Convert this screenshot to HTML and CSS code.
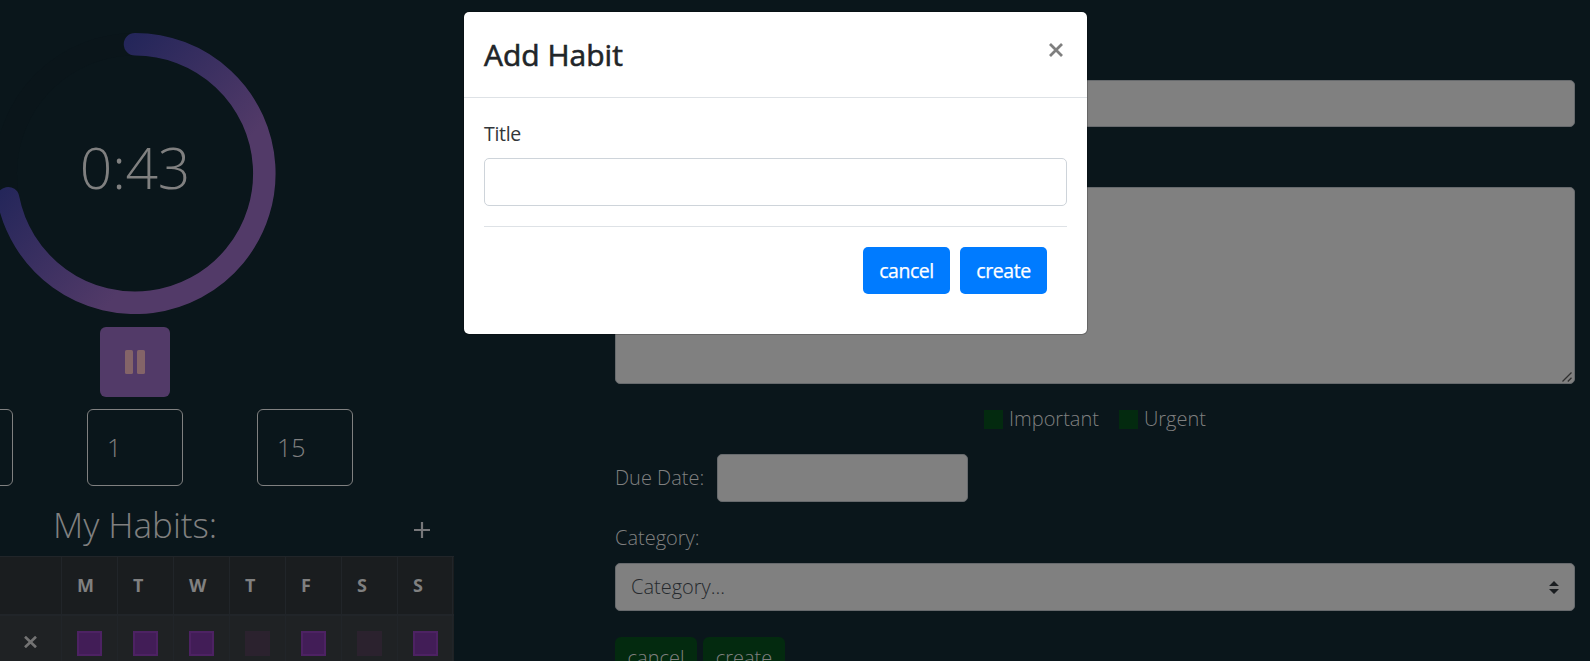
FILE: index.html
```html
<!DOCTYPE html>
<html lang="en">
<head>
<meta charset="utf-8">
<title>Add Habit</title>
<link rel="stylesheet" href="styles.css">
</head>
<body>
<div class="app">
  <aside class="sidebar">
    <section class="timer">
      <div class="dial">
        <svg class="ring" width="282" height="282" viewBox="-6 32 282 282">
          <defs>
            <linearGradient id="arc" gradientUnits="userSpaceOnUse" x1="95" y1="81" x2="213" y2="182">
              <stop offset="0" stop-color="#24265a"/>
              <stop offset="1" stop-color="#523a68"/>
            </linearGradient>
          </defs>
          <circle cx="135" cy="173.5" r="129.3" fill="none" stroke="#0a151a" stroke-width="22.5"/>
          <path d="M135 44.2A129.3 129.3 0 1 1 8.1 198.2" fill="none" stroke="url(#arc)" stroke-width="22.5" stroke-linecap="round"/>
        </svg>
        <span class="time">0:43</span>
      </div>
      <button class="pause" aria-label="Pause">
        <svg width="22" height="24" viewBox="0 0 22 24"><rect x="1" width="8" height="24" rx="1.6"/><rect x="13" width="8" height="24" rx="1.6"/></svg>
      </button>
      <div class="durations">
        <div class="duration"></div>
        <div class="duration">1</div>
        <div class="duration">15</div>
      </div>
    </section>
    <section class="habits">
      <header class="habits-head">
        <h2>My Habits:</h2>
        <svg class="plus" width="16" height="16" viewBox="0 0 16 16"><path d="M8 0V16M0 8H16"/></svg>
      </header>
      <div class="week week-head">
        <div></div><div>M</div><div>T</div><div>W</div><div>T</div><div>F</div><div>S</div><div>S</div>
      </div>
      <div class="week week-row">
        <div class="remove"><svg width="13" height="12" viewBox="0 0 13 12"><path d="M1 .7L12 11.3M12 .7L1 11.3"/></svg></div>
        <div><i class="day done"></i></div><div><i class="day done"></i></div><div><i class="day done"></i></div><div><i class="day"></i></div><div><i class="day done"></i></div><div><i class="day"></i></div><div><i class="day done"></i></div>
      </div>
    </section>
  </aside>
  <main class="task-form">
    <div class="field title-field"></div>
    <div class="field notes-field">
      <svg class="grip" width="10" height="10" viewBox="0 0 10 10"><path d="M.5 9.5L9.5 .5M5.8 9.5L9.5 5.8"/></svg>
    </div>
    <div class="flags">
      <label class="flag"><i></i><span>Important</span></label>
      <label class="flag"><i></i><span>Urgent</span></label>
    </div>
    <div class="due"><span>Due Date:</span><div class="field due-field"></div></div>
    <div class="category-label">Category:</div>
    <div class="field select"><span>Category...</span>
      <svg width="10" height="13" viewBox="0 0 10 13"><path d="M0 5L5 0L10 5ZM0 8L5 13L10 8Z"/></svg>
    </div>
    <div class="actions"><button>cancel</button><button>create</button></div>
  </main>
</div>
<div class="modal" role="dialog" aria-label="Add Habit">
  <header class="modal-head">
    <h1>Add Habit</h1>
    <svg class="close" width="14" height="14" viewBox="0 0 14 14"><path d="M1 1L13 13M13 1L1 13"/></svg>
  </header>
  <div class="modal-body">
    <label class="modal-label" for="habit">Title</label>
    <input class="modal-input" id="habit" type="text">
    <footer class="modal-foot"><button>cancel</button><button>create</button></footer>
  </div>
</div>
</body>
</html>
```
FILE: styles.css
```css
* { box-sizing: border-box; }
html, body { margin: 0; height: 100%; overflow: hidden; }
body { background: #0a161b; color: #808080; font: 300 20px/30px "Open Sans", sans-serif; }
button { border: 0; font: inherit; }
.app { display: flex; width: 1590px; height: 661px; overflow: hidden; }
.sidebar { flex: none; width: 454px; }
.timer { display: flex; flex-direction: column; align-items: center; width: 270px; padding-top: 32px; }
.dial { display: grid; place-items: center; width: 282px; height: 282px; }
.ring, .time { grid-area: 1 / 1; }
.time { font-size: 57px; line-height: 60px; padding-bottom: 13px; letter-spacing: -.2px; }
.pause { flex: none; display: grid; place-items: center; width: 70px; height: 70px; margin-top: 13px; padding: 0; border-radius: 6px; background: #523a68; }
.pause rect { fill: #846468; }
.durations { display: flex; justify-content: center; gap: 74px; width: 270px; margin-top: 12px; }
.duration { flex: none; width: 96px; height: 77px; padding: 0 19px; border: 1px solid #808080; border-radius: 6px; font-size: 25px; line-height: 75px; }
.habits-head { display: flex; justify-content: space-between; align-items: center; height: 70px; padding: 0 24px 0 53px; }
.habits-head h2 { margin: 7px 0 0; font-size: 35px; font-weight: 300; line-height: 48px; }
.plus { margin-top: 18px; stroke: #77777a; stroke-width: 2.2; }
.week { display: grid; grid-template-columns: 61px repeat(7, 56px); width: 454px; }
.week > div { border-left: 1px solid #212529; }
.week > div:first-child { border-left: 0; }
.week > div:last-child { border-right: 1px solid #212529; }
.week-head { height: 60px; border: solid #212529; border-width: 1px 0 2px; background: #1a1d1f; font-size: 18px; font-weight: 700; line-height: 56px; }
.week-head > div { padding-left: 15px; }
.week-row { height: 60px; background: #1f2224; }
.week-row > div { padding: 15px; }
.day { display: block; width: 25px; height: 25px; background: #2b222e; }
.day.done { border: 2px solid #4d2263; background: #421d57; }
.week-row > .remove { padding: 20px 0 0 24px; line-height: 0; }
.remove path { stroke: #737373; stroke-width: 2.6; }
.task-form { width: 1121px; padding: 80px 0 0 161px; }
.field { border: 1px solid #676a6d; border-radius: 5px; background: #808080; }
.title-field { height: 47px; }
.notes-field { display: flex; justify-content: flex-end; align-items: flex-end; height: 197px; margin-top: 60px; padding: 0 2px 1px 0; }
.grip path { fill: none; stroke: #303030; stroke-width: 1.3; }
.flags { display: flex; justify-content: center; gap: 20px; height: 30px; margin-top: 20px; }
.flag { display: flex; align-items: center; gap: 6px; }
.flag i { width: 19px; height: 19px; background: #032a0f; }
.due { display: flex; align-items: center; gap: 13px; margin-top: 20px; }
.due-field { width: 251px; height: 48px; }
.category-label { margin-top: 21px; }
.select { display: flex; justify-content: space-between; align-items: center; height: 48px; margin-top: 10px; padding: 0 15px; color: #25292d; }
.select path { fill: #1a1d20; }
.actions { display: flex; gap: 6px; margin-top: 26px; }
.actions button { display: flex; justify-content: center; align-items: flex-start; width: 82px; height: 48px; padding: 6px 0 0; border-radius: 6px; background: #032a0f; color: #808080; line-height: 30px; }
.modal { position: absolute; left: 463px; top: 11px; width: 625px; height: 324px; border: 1px solid rgba(0, 0, 0, .2); border-radius: 6px; background: #fff; background-clip: padding-box; color: #212529; font-family: "Open Sans", sans-serif; font-weight: 400; }
.modal-head { display: flex; justify-content: space-between; height: 86px; padding: 20px 24px 0 20px; border-bottom: 1px solid #dee2e6; }
.modal-head h1 { margin: 0; font-size: 30px; font-weight: 400; line-height: 46px; -webkit-text-stroke: .6px #212529; }
.close { margin-top: 11px; }
.close path { stroke: #7f7f7f; stroke-width: 2.8; }
.modal-body { padding: 20px; }
.modal-label { display: block; height: 40px; font-size: 19.5px; line-height: 31px; letter-spacing: -.3px; color: #32363a; }
.modal-input { display: block; width: 100%; height: 48px; border: 1px solid #ced4da; border-radius: 5px; background: #fff; }
.modal-foot { display: flex; justify-content: flex-end; gap: 10px; margin-top: 20px; padding: 20px 20px 0; border-top: 1px solid #dee2e6; }
.modal-foot button { width: 87px; height: 47px; padding: 0; border-radius: 5px; background: #007bff; color: #fff; font-size: 19.5px; line-height: 48px; letter-spacing: -.45px; -webkit-text-stroke: .25px #fff; }
```
